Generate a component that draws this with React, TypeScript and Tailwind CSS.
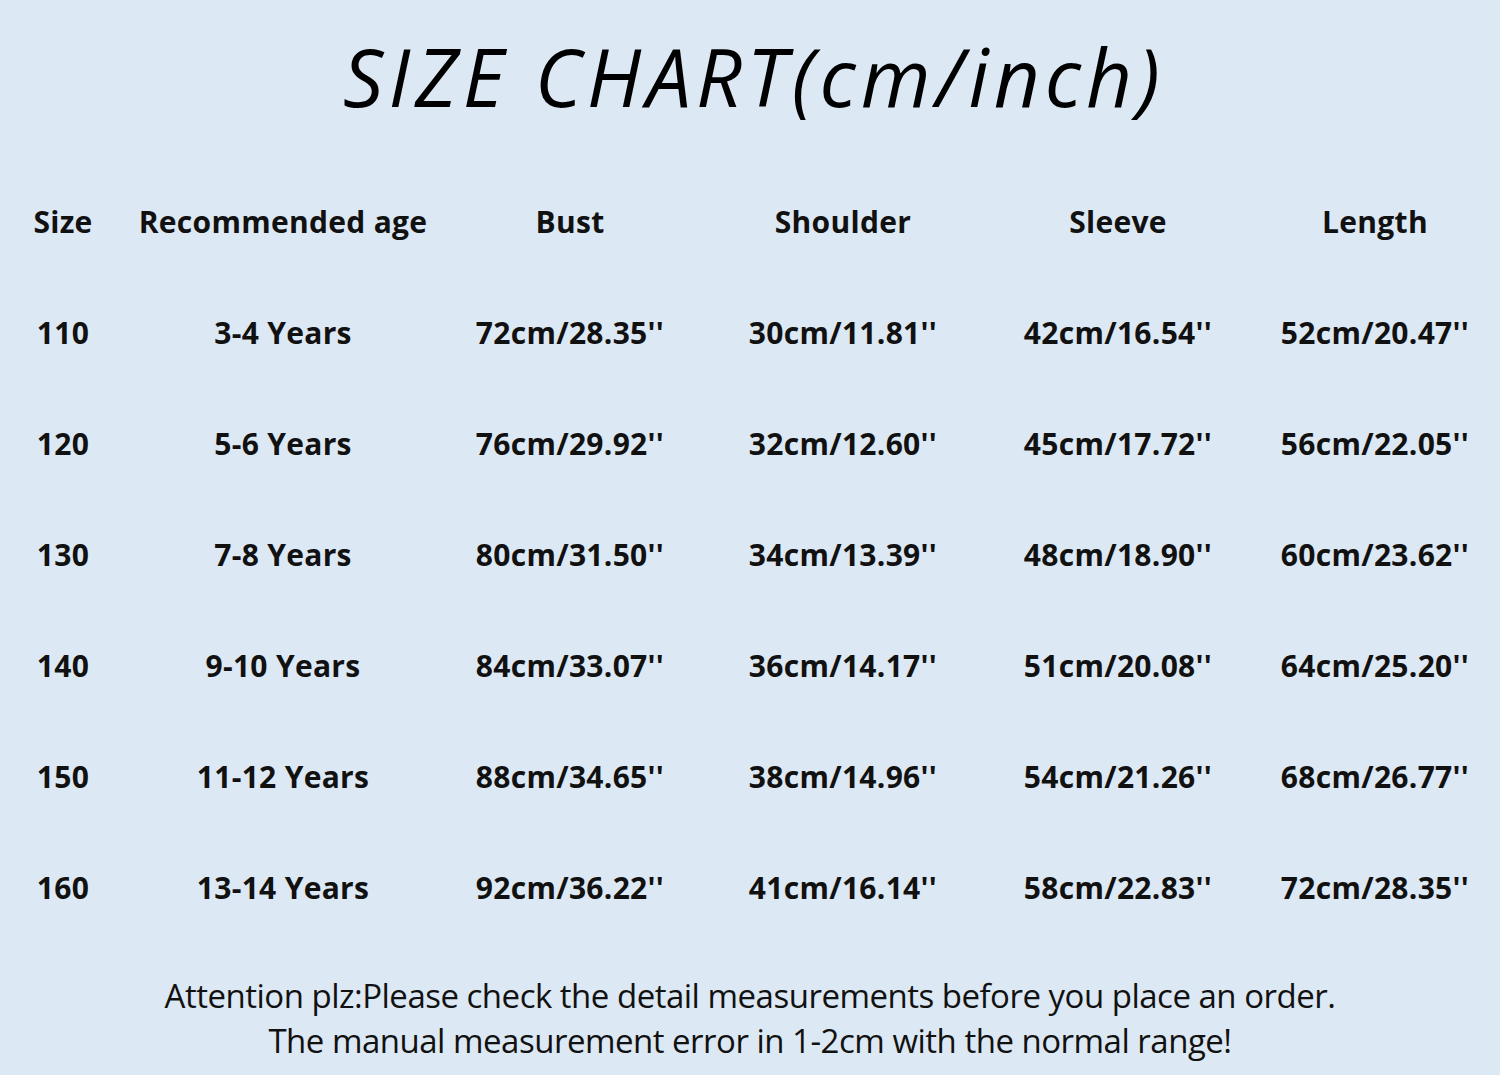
import React from 'react';

const headers = ['Size', 'Recommended age', 'Bust', 'Shoulder', 'Sleeve', 'Length'];

const rows: string[][] = [
  ['110', '3-4 Years', "72cm/28.35''", "30cm/11.81''", "42cm/16.54''", "52cm/20.47''"],
  ['120', '5-6 Years', "76cm/29.92''", "32cm/12.60''", "45cm/17.72''", "56cm/22.05''"],
  ['130', '7-8 Years', "80cm/31.50''", "34cm/13.39''", "48cm/18.90''", "60cm/23.62''"],
  ['140', '9-10 Years', "84cm/33.07''", "36cm/14.17''", "51cm/20.08''", "64cm/25.20''"],
  ['150', '11-12 Years', "88cm/34.65''", "38cm/14.96''", "54cm/21.26''", "68cm/26.77''"],
  ['160', '13-14 Years', "92cm/36.22''", "41cm/16.14''", "58cm/22.83''", "72cm/28.35''"],
];

// column grid matched to the photo's column centres
const gridCols = 'grid grid-cols-[126px_314px_260px_286px_264px_250px]';

export default function App() {
  return (
    <div className="w-[1500px] h-[1080px] bg-white flex flex-col">
      <div className="h-[1075px] bg-[#dce8f3] flex flex-col text-[#111]">
        {/* title */}
        <div className="h-[166px] flex items-center justify-center pb-[14px] pl-[8px]">
          <h1
            className="text-[80px] italic font-normal tracking-[5px] text-black"
            style={{ fontFamily: '"Open Sans", "DejaVu Sans", sans-serif' }}
          >
            SIZE CHART(cm/inch)
          </h1>
        </div>

        {/* table */}
        <div style={{ fontFamily: '"Open Sans", "DejaVu Sans", sans-serif' }}>
          <div className={`${gridCols} h-[111px] items-center`}>
            {headers.map((h) => (
              <div key={h} className="text-center text-[30px] font-bold tracking-[0.3px] text-[#111]">
                {h}
              </div>
            ))}
          </div>
          {rows.map((r) => (
            <div key={r[0]} className={`${gridCols} h-[111px] items-center`}>
              {r.map((c, i) => (
                <div key={i} className="text-center text-[30px] font-bold tracking-[0.3px] text-[#111]">
                  {c}
                </div>
              ))}
            </div>
          ))}
        </div>

        {/* note */}
        <div
          className="flex flex-col items-center pt-[30px] text-[33px] leading-[45px] text-[#111]"
          style={{ fontFamily: '"Open Sans", "DejaVu Sans", sans-serif' }}
        >
          <p className="tracking-[-0.5px]">Attention plz:Please check the detail measurements before you place an order.</p>
          <p className="tracking-[-0.5px]">The manual measurement error in 1-2cm with the normal range!</p>
        </div>
      </div>
    </div>
  );
}
